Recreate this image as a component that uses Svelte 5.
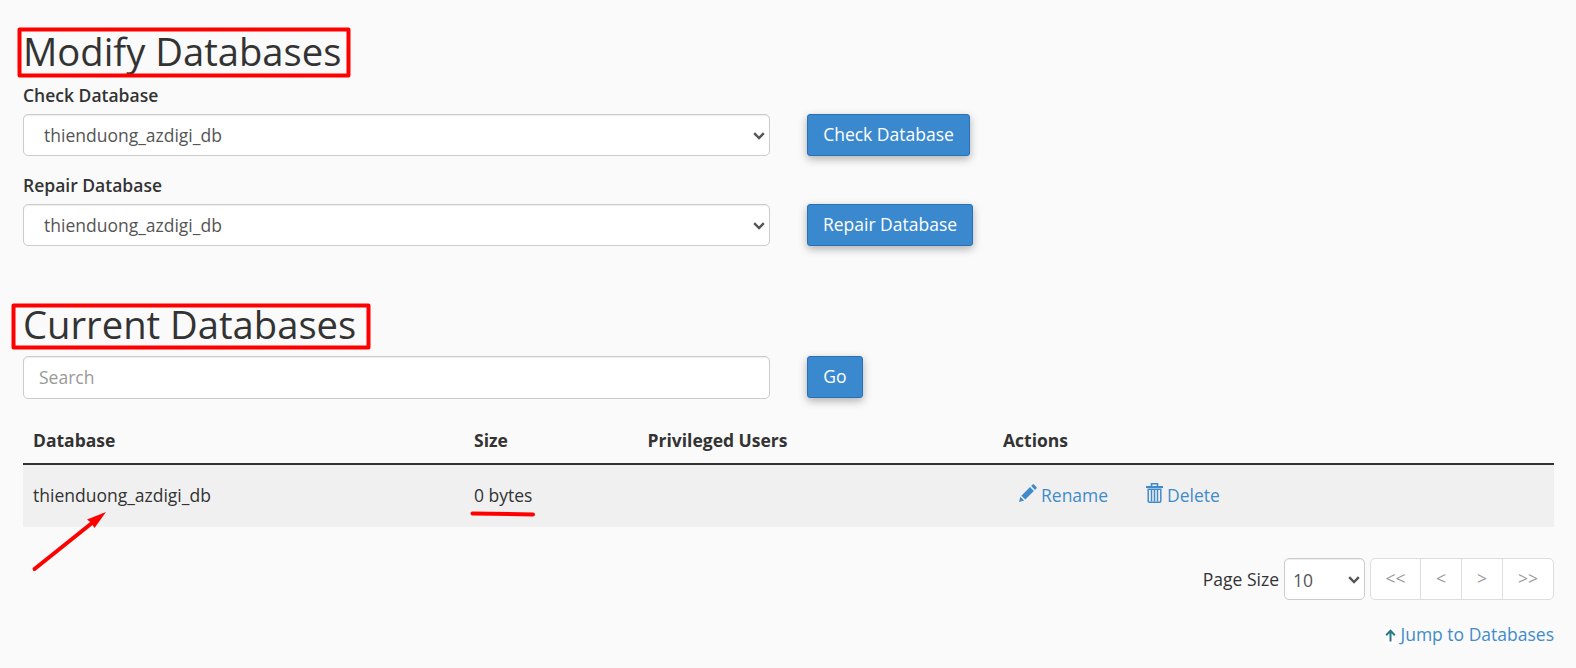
<script>
  const name = 'thienduong_azdigi_db';
  const forms = [
    { label: 'Check Database', width: 163 },
    { label: 'Repair Database', width: 166 }
  ];
  let search = $state('');
</script>

{#snippet chevron()}
  <svg class="chevron" width="12" height="8" viewBox="0 0 12 8"><path d="M1.2 1.2 6 6 10.8 1.2" fill="none" stroke="#555" stroke-width="2.4" /></svg>
{/snippet}

<main>
  <h1><span>Modify Databases</span></h1>
  {#each forms as form}
    <section class="field">
      <label for={form.label}>{form.label}</label>
      <div class="row">
        <div class="select wide">
          <select id={form.label}><option>{name}</option></select>
          {@render chevron()}
        </div>
        <button class="primary" style="width: {form.width}px">{form.label}</button>
      </div>
    </section>
  {/each}

  <h1 class="current"><span>Current Databases</span></h1>
  <div class="row search">
    <input type="text" placeholder="Search" bind:value={search} />
    <button class="primary go">Go</button>
  </div>

  <div class="table">
    <div class="tr head"><b>Database</b><b>Size</b><b>Privileged Users</b><b>Actions</b></div>
    <div class="tr body">
      <span>{name}</span><span>0 bytes</span><span></span>
      <span class="actions">
        <a href="#rename"><svg width="18" height="18" viewBox="0 0 18 18" fill="#428bca"><path d="M0 18 1.4 12.8 5.2 16.6ZM2.4 11.7 11 3.1 14.9 7 6.3 15.6ZM12.2 2 13.5.6Q14.3-.2 15.1.6L17.4 2.9Q18.2 3.7 17.4 4.5L16 5.9Z" /></svg><span>Rename</span></a>
        <a href="#delete"><svg width="17" height="20" viewBox="0 0 17 20" fill="none" stroke="#428bca"><path d="M5.5 3V.8h6V3" stroke-width="1.6" /><path d="M0 4h17" stroke-width="2" /><path d="M2.2 6.2h12.6V18q0 1.2-1.2 1.2H3.4Q2.2 19.2 2.2 18Z" stroke-width="1.5" /><path d="M5.5 6.5v12M8.5 6.5v12M11.5 6.5v12" stroke-width="1.5" /></svg><span>Delete</span></a>
      </span>
    </div>
  </div>

  <div class="paging">
    <span class="ps">Page Size</span>
    <div class="select small"><select aria-label="Page Size"><option>10</option></select>{@render chevron()}</div>
    <div class="pager"><span>&lt;&lt;</span><span>&lt;</span><span>&gt;</span><span>&gt;&gt;</span></div>
  </div>
  <a href="#databases" class="jump"><svg width="11" height="16" viewBox="0 0 11 16"><path fill="#fff" d="M0 0h11v16H0z" /><path d="M5.5 13.5V3M1.2 7.2 5.5 2.6 9.8 7.2" fill="none" stroke="#277987" stroke-width="2" /></svg><span>Jump to Databases</span></a>

  <svg class="marks" width="1576" height="668" fill="none" stroke="#f00" stroke-linejoin="round" stroke-linecap="round">
    <path d="M19.5 29.5H348.5V75.5H19.5ZM13.5 305.5H368.5V347.5H13.5Z" stroke-width="4" />
    <path d="M472.5 513.5 533 514.5" stroke-width="4" />
    <path d="M34.5 569 92 523" stroke-width="4" />
    <path d="M106 512 87 519.5 91 522.5 94.5 528Z" fill="#f00" stroke="none" />
  </svg>
</main>

<style>
  :global(body) { margin: 0; background: #fafafa; }
  main { position: relative; box-sizing: border-box; width: 1576px; height: 668px; padding: 28px 22px 0 23px; overflow: hidden; background: #fafafa; color: #333; font: 17.5px/25px "Open Sans", sans-serif; }
  h1 { margin: 0; height: 49px; font-size: 38.2px; line-height: 47px; font-weight: 400; white-space: nowrap; }
  .current { margin-top: 50px; height: 59px; line-height: 54px; }
  .field { height: 90px; }
  .field + .field { height: 80px; }
  label { display: block; height: 37px; line-height: 37px; font-weight: 600; font-size: 17.5px; }
  .row { display: flex; gap: 37px; height: 42px; }
  .select { display: grid; align-items: center; }
  .select > :global(*) { grid-area: 1 / 1; }
  .wide { width: 747px; }
  .small { width: 81px; height: 42px; }
  select, input { box-sizing: border-box; width: 100%; height: 42px; margin: 0; border: 1px solid #ccc; border-radius: 5px; background: #fff; color: #555; font: inherit; box-shadow: inset 0 1px 1px rgba(0,0,0,.075); appearance: none; padding: 0 20px; outline: 0; }
  .small select { padding: 0 8px 3px; }
  .chevron { justify-self: end; margin-right: 5px; margin-top: 2px; pointer-events: none; }
  input { width: 747px; height: 43px; padding: 0 15px 2px; }
  input::placeholder { color: #999; opacity: 1; }
  .primary { box-sizing: border-box; height: 42px; padding: 0 0 2px; border: 1px solid #2a70b4; border-radius: 3px; background: #3a89ce; color: #fff; font: inherit; box-shadow: 0 3px 8px rgba(0,0,0,.3); white-space: nowrap; }
  .go { width: 56px; }
  .search { height: 43px; }
  .table { margin-top: 17px; }
  .tr { display: grid; grid-template-columns: 441px 173.5px 355.5px 1fr; box-sizing: border-box; padding-left: 10px; }
  .head { height: 49px; border-bottom: 2px solid #333; line-height: 48px; }
  .tr b { font-weight: 700; }
  .body { height: 62px; line-height: 61px; background: #f0f0f0; }
  .tr > * { white-space: nowrap; }
  .actions { display: flex; height: 60px; padding-left: 16px; line-height: 60px; }
  a { display: flex; align-items: center; color: #428bca; text-decoration: none; white-space: nowrap; }
  .actions svg { margin-right: 4px; margin-bottom: 4px; }
  .actions a:first-child { width: 127px; }
  .paging { display: flex; justify-content: flex-end; margin-top: 31px; line-height: 42px; }
  .ps { margin-right: 5px; }
  .pager { display: flex; margin-left: 5px; width: 184px; height: 42px; box-sizing: border-box; border: 1px solid #ddd; border-radius: 5px; background: #fff; color: #999; line-height: 39px; text-align: center; }
  .pager span { flex: none; width: 40px; border-right: 1px solid #ddd; }
  .pager span:first-child { width: 49px; }
  .pager span:last-child { width: 50px; border: 0; }
  .jump { margin-top: 22px; justify-content: flex-end; height: 25px; }
  .jump svg { margin-right: 4px; margin-top: 3px; }
  .marks { position: absolute; left: 0; top: 0; pointer-events: none; }
</style>
